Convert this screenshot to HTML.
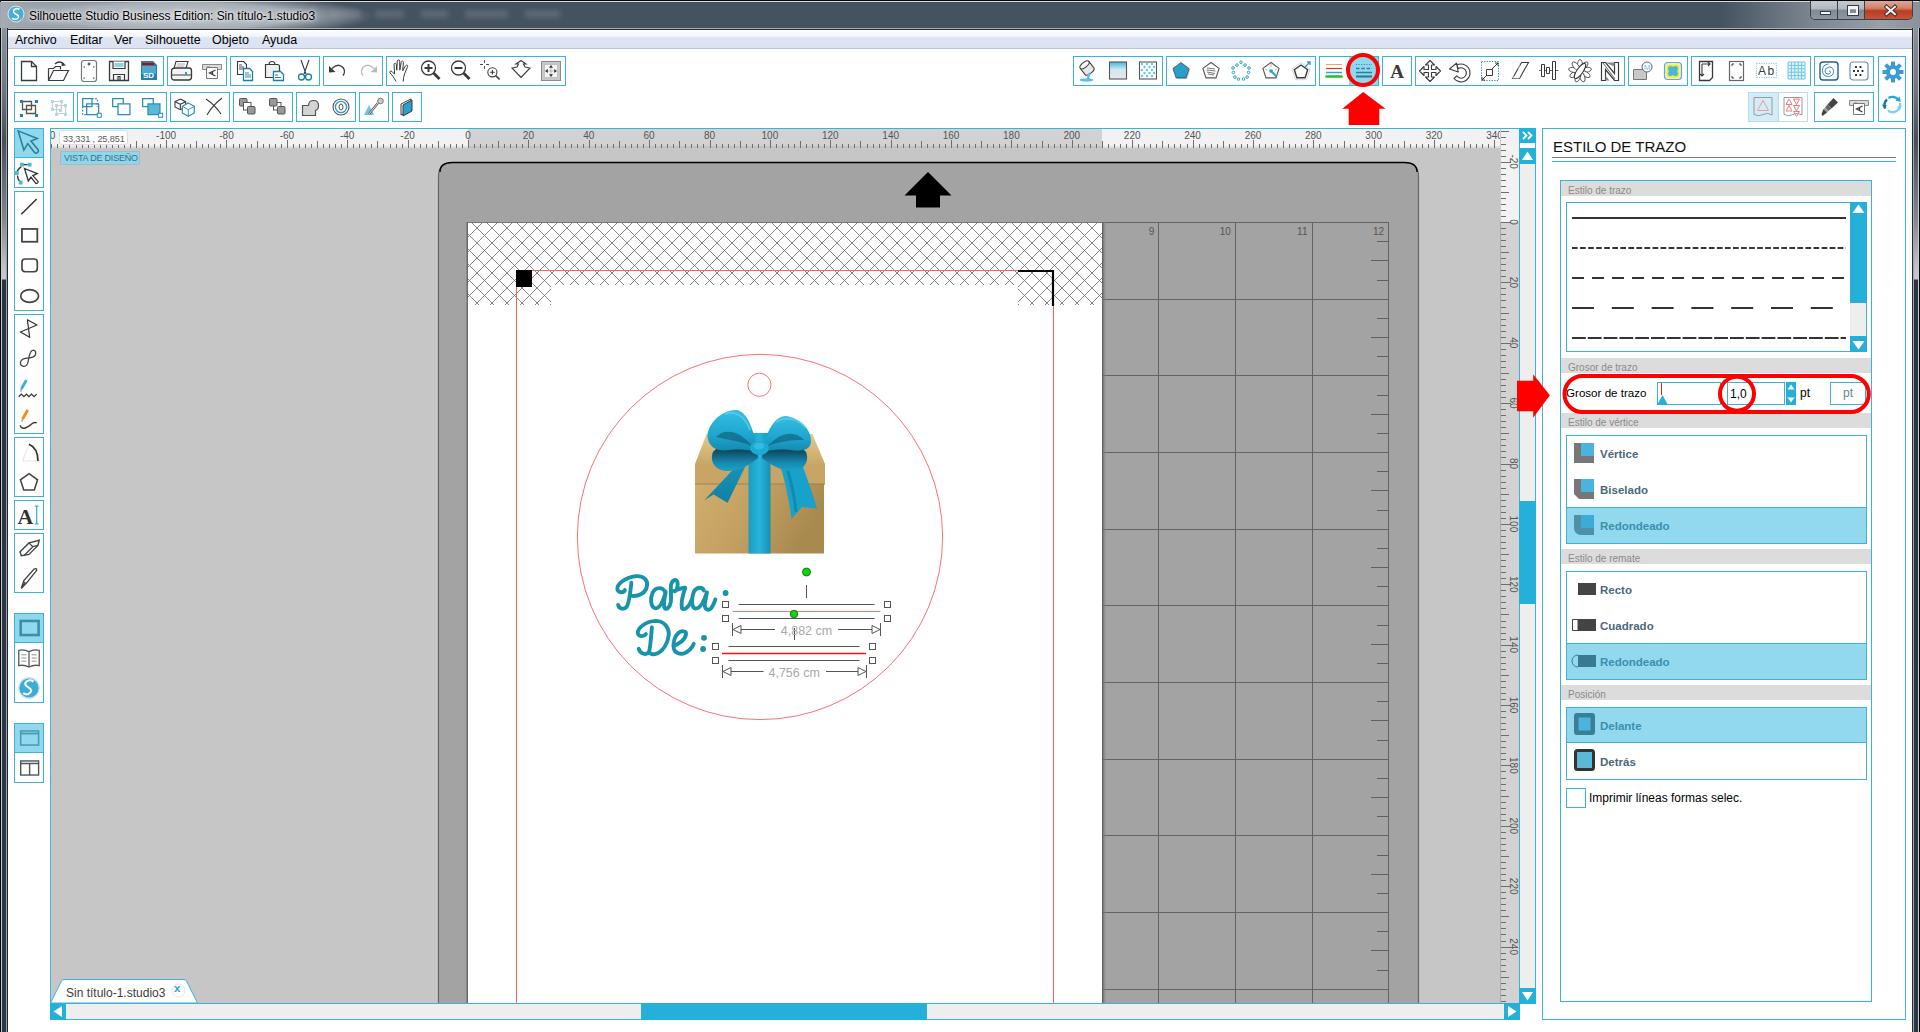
<!DOCTYPE html><html><head><meta charset="utf-8"><style>*{margin:0;padding:0;box-sizing:border-box}
html,body{width:1920px;height:1032px;overflow:hidden;background:#fff;font-family:"Liberation Sans",sans-serif;position:relative}
.a{position:absolute}
.box{position:absolute;border:1px solid #3bb2da;background:#fff}
svg{position:absolute;overflow:visible}
.hd{left:1561px;width:310px;height:15px;background:#dcdcdc;font-size:10px;color:#8a8a8a;padding:3.5px 0 0 7px;white-space:nowrap;line-height:12px}
.opt{left:1600px;margin-top:2px;font-size:11.5px;font-weight:bold;color:#4b6878;white-space:nowrap}
.opt.sl{color:#3a8fae}
</style></head><body>
<div class="a" style="left:0;top:0;width:1920px;height:1032px;background:linear-gradient(90deg,#8e969e 0,#6c7680 12px,#56626d 30px,#45525f 80px,#45525f 1720px,#7a858e 1810px,#96a0a8 1880px,#8a939b 1920px)"></div>
<div class="a" style="left:0;top:0;width:1920px;height:1px;background:#050607"></div>
<div class="a" style="left:0;top:0;width:1px;height:1032px;background:#1c2228"></div>

<div class="a" style="left:1px;top:1px;width:1918px;height:1px;background:#d5dade"></div><div class="a" style="left:8px;top:28px;width:1904px;height:1px;background:#a8aeb4"></div>
<div class="a" style="left:0;top:28px;width:8px;height:1004px;background:linear-gradient(90deg,#050607 0,#050607 1px,#c4c9ce 1px,#c4c9ce 2px,transparent 2px,transparent 6px,#9aa2aa 6px,#9aa2aa 7px,#20262e 7px)"></div><div class="a" style="left:2px;top:28px;width:4px;height:1004px;background:linear-gradient(180deg,#8a929a 0,#6e7780 62px,#45505b 112px,#7f878e 190px,#c0c4c8 240px,#c4c8cc 251px,#2a3542 252px,#2c3844 1004px)"></div>
<div class="a" style="left:1912px;top:28px;width:8px;height:1004px;background:linear-gradient(90deg,#262b31 0,#262b31 1px,#a0a8b0 1px,#a0a8b0 2px,transparent 2px,transparent 6px,#c8ccd0 6px,#c8ccd0 7px,#050607 7px)"></div><div class="a" style="left:1914px;top:28px;width:4px;height:1004px;background:linear-gradient(180deg,#8a929a 0,#6e7780 62px,#45505b 112px,#7f878e 190px,#c0c4c8 240px,#c4c8cc 251px,#2a3542 252px,#2c3844 1004px)"></div>
<div class="a" style="left:0;top:2px;width:460px;height:26px;background:radial-gradient(ellipse 200px 22px at 175px 14px,rgba(200,206,211,0.95) 0,rgba(185,192,198,0.85) 60%,rgba(69,82,95,0) 100%)"></div>
<div class="a" style="left:0;top:2px;width:120px;height:26px;background:linear-gradient(90deg,rgba(165,172,179,0.95),rgba(165,172,179,0.6) 60%,rgba(165,172,179,0))"></div>
<div class="a" style="left:7px;top:29px;width:1906px;height:1px;background:#2a2e33"></div>

<svg width="20" height="20" style="left:6px;top:4px"><circle cx="10" cy="10" r="8" fill="#48afd2" stroke="#d8e6ea" stroke-width="1"/><path d="M13.5 5.2 C10 3.8 6.2 5.6 8 8.6 C9.6 11 13.4 10.4 12.4 13.4 C11.6 15.6 8.4 15.8 6 14.4" stroke="#fff" stroke-width="1.6" fill="none"/></svg>
<div class="a" style="left:29px;top:8.5px;font-size:12px;color:#000;white-space:nowrap;letter-spacing:-0.05px;text-shadow:0 0 6px #fff,0 0 3px #fff">Silhouette Studio Business Edition: Sin título-1.studio3</div>
<div class="a" style="left:325px;top:10px;width:250px;height:10px;filter:blur(2.5px);opacity:0.24">
<span class="a" style="left:5px;width:30px;height:8px;background:#aab3bb"></span><span class="a" style="left:50px;width:29px;height:8px;background:#aab3bb"></span><span class="a" style="left:96px;width:27px;height:8px;background:#aab3bb"></span><span class="a" style="left:140px;width:43px;height:8px;background:#aab3bb"></span><span class="a" style="left:200px;width:35px;height:8px;background:#aab3bb"></span></div>
<div class="a" style="left:1810px;top:1px;width:103px;height:19px;border:1px solid #3a4047;border-top:none;border-radius:0 0 5px 5px;overflow:hidden">
<div class="a" style="left:0;top:0;width:27px;height:18px;background:linear-gradient(180deg,#c4cad0 0,#b0b8c0 45%,#7f8a94 50%,#8d97a1 100%);border-right:1px solid #3a4047"></div>
<div class="a" style="left:27px;top:0;width:27px;height:18px;background:linear-gradient(180deg,#c4cad0 0,#b0b8c0 45%,#7f8a94 50%,#8d97a1 100%);border-right:1px solid #3a4047"></div>
<div class="a" style="left:54px;top:0;width:48px;height:18px;background:linear-gradient(180deg,#e0a796 0,#d2806a 40%,#b93d22 55%,#c8533a 100%)"></div>
<div class="a" style="left:9px;top:10px;width:11px;height:4px;background:#f4f4f4;border:1px solid #333d47"></div>
<div class="a" style="left:37px;top:5px;width:10px;height:9px;border:2px solid #f4f4f4;border-top-width:3px;outline:1px solid #333d47"></div>
<svg width="48" height="18" style="left:54px;top:0"><path d="M21.5 5.8L30 13.2M30 5.8L21.5 13.2" stroke="#3a2a2a" stroke-width="3.8" stroke-linecap="square"/><path d="M21.5 5.8L30 13.2M30 5.8L21.5 13.2" stroke="#f4f4f4" stroke-width="2" stroke-linecap="square"/></svg>
</div>
<!-- menu -->
<div class="a" style="left:8px;top:30px;width:1904px;height:19px;background:linear-gradient(180deg,#ffffff 0,#f3f5fb 35%,#dfe5f2 42%,#dbe2f1 100%);border-bottom:1px solid #b9c3d6"></div>
<div class="a" style="left:15px;top:33px;font-size:12.5px;color:#000;white-space:nowrap;word-spacing:0">
<span class="a" style="left:0">Archivo</span><span class="a" style="left:55px">Editar</span><span class="a" style="left:99px">Ver</span><span class="a" style="left:130px">Silhouette</span><span class="a" style="left:197px">Objeto</span><span class="a" style="left:247px">Ayuda</span></div>
<div class="a" style="left:8px;top:49px;width:1904px;height:983px;background:#fff"></div>

<div class="box" style="left:14px;top:56px;width:150px;height:30px;"></div>
<svg width="30" height="30" style="left:14px;top:56px"><path d="M7.5 5.5h10l5 5v14h-15z" fill="#fff" stroke="#3a3a3a" stroke-width="1.3"/><path d="M17.5 5.5v5h5" fill="none" stroke="#3a3a3a" stroke-width="1.3"/></svg>
<svg width="30" height="30" style="left:44px;top:56px"><path d="M4.5 12.5h5l2-2h5v3" fill="#eee" stroke="#3a3a3a" stroke-width="1.2"/><path d="M4.5 12.5v12h15l5-10h-15l-5 10" fill="#fafafa" stroke="#3a3a3a" stroke-width="1.2"/><path d="M11 8 q4-4 9 0" fill="none" stroke="#3a3a3a" stroke-width="1.3"/><path d="M18 6l4 3.5-4.5 0.5z" fill="#3a3a3a"/></svg>
<svg width="30" height="30" style="left:74px;top:56px"><rect x="7.5" y="4.5" width="15" height="21" rx="2.5" fill="#fff" stroke="#777" stroke-width="1.2"/><path d="M15 6.5v3M13.5 8h3M9.5 11h1.5M19 11h1.5M9.5 22h1.5M19 22h1.5" stroke="#3a3a3a" stroke-width="1.2"/></svg>
<svg width="30" height="30" style="left:104px;top:56px"><path d="M5.5 5.5h19v19h-19z" fill="#f4f4f4" stroke="#3a3a3a" stroke-width="1.3"/><path d="M9 5.5v7h12v-7" fill="#fff" stroke="#3a3a3a" stroke-width="1.2"/><path d="M10.5 8h9M10.5 10h9" stroke="#2aa0c8" stroke-width="1"/><path d="M9.5 24.5v-6h11v6M14 24.5v-4h2v4" fill="none" stroke="#3a3a3a" stroke-width="1.2"/></svg>
<svg width="30" height="30" style="left:134px;top:56px"><path d="M7 5h12l4 4v15h-16z" fill="#1f82a6"/><path d="M8 7h12v2h-12z" fill="#d00000"/><path d="M8 10h14v8h-14z" fill="#5bbde0" opacity="0.7"/><text x="9" y="22" font-size="8" font-weight="bold" fill="#fff" font-family="Liberation Sans">SD</text></svg>
<div class="box" style="left:167px;top:56px;width:60px;height:30px;"></div>
<svg width="30" height="30" style="left:167px;top:56px"><path d="M9 5.5h12l-2 7h-12z" fill="#fff" stroke="#3a3a3a" stroke-width="1.1"/><path d="M10 8h8M9.5 10h8" stroke="#999" stroke-width="0.8"/><path d="M4.5 15q0-3 4-3h14q2 0 2 3v6q0 3-3 3h-14q-3 0-3-3z" fill="#f4f4f4" stroke="#3a3a3a" stroke-width="1.3"/><path d="M5 19h19" stroke="#3a3a3a" stroke-width="1"/><rect x="18" y="16" width="2" height="3" fill="#2aa0c8"/></svg>
<svg width="30" height="30" style="left:197px;top:56px"><path d="M5.5 8.5h19v5h-19z" fill="#ddd" stroke="#888" stroke-width="1"/><path d="M9.5 11.5h11v11h-11z" fill="#fff" stroke="#777" stroke-width="1"/><path d="M18.5 14l-6 3 6 3M15.5 15.5v3" fill="none" stroke="#3a3a3a" stroke-width="1.3"/><path d="M10 10.5h3" stroke="#6cc6e6" stroke-width="1"/></svg>
<div class="box" style="left:230px;top:56px;width:90px;height:30px;"></div>
<svg width="30" height="30" style="left:230px;top:56px"><path d="M7.5 5.5h6l3 3v10h-9z" fill="#fff" stroke="#3a3a3a" stroke-width="1.1"/><path d="M9 9h3M9 11h5M9 13h5" stroke="#3a3a3a" stroke-width="0.9"/><path d="M13.5 12.5h6l3 3v9h-9z" fill="#fff" stroke="#1f7fa0" stroke-width="1.3"/><path d="M15 17h4M15 19h6M15 21h6" stroke="#1f7fa0" stroke-width="0.9"/></svg>
<svg width="30" height="30" style="left:260px;top:56px"><path d="M5.5 8.5h12q2 0 2 2v11h-14z" fill="#f0f0f0" stroke="#3a3a3a" stroke-width="1.2"/><path d="M9 8.5q0-3 3-3t3 3z" fill="#fff" stroke="#3a3a3a" stroke-width="1.1"/><path d="M13.5 15.5h7l3 3v6h-10z" fill="#fff" stroke="#1f7fa0" stroke-width="1.3"/><path d="M15 19h3M15 21.5h6" stroke="#1f7fa0" stroke-width="1"/></svg>
<svg width="30" height="30" style="left:290px;top:56px"><path d="M11 4l5 14M19 4l-5 14" stroke="#3a3a3a" stroke-width="1.1"/><circle cx="11.5" cy="21" r="3" fill="none" stroke="#1f7fa0" stroke-width="1.3"/><circle cx="18.5" cy="21" r="3" fill="none" stroke="#1f7fa0" stroke-width="1.3"/></svg>
<div class="box" style="left:323px;top:56px;width:60px;height:30px;"></div>
<svg width="30" height="30" style="left:323px;top:56px"><path d="M9 12.5q6-6 11-1q3 4 0 8" fill="none" stroke="#3a3a3a" stroke-width="1.3"/><path d="M6 10l0 6.5 6.5-0.5z" fill="#3a3a3a"/></svg>
<svg width="30" height="30" style="left:353px;top:56px"><path d="M21 12.5q-6-6-11-1q-3 4 0 8" fill="none" stroke="#bbb" stroke-width="1.3"/><path d="M24 10l0 6.5-6.5-0.5z" fill="#bbb"/></svg>
<div class="box" style="left:386px;top:56px;width:180px;height:30px;"></div>
<svg width="30" height="30" style="left:386px;top:56px"><path d="M10 25.5C8 21.5 5.5 18.5 4 16.8C3.3 15.6 4.6 14.6 5.8 15.4L8.6 18.2L8 8.6C7.9 6.9 10.2 6.8 10.3 8.5L10.8 14.2L11.3 5.2C11.4 3.4 13.7 3.4 13.7 5.2L13.8 14.2L15.2 6.3C15.5 4.6 17.6 4.8 17.4 6.5L16.7 14.8L19.5 9.8C20.3 8.4 22.2 9 21.6 10.6L18.6 17.8C17.8 20.2 17.2 22.8 17.2 25.5" fill="#fff" stroke="#3a3a3a" stroke-width="1"/></svg>
<svg width="30" height="30" style="left:416px;top:56px"><circle cx="12.5" cy="12" r="7" fill="#fff" stroke="#3a3a3a" stroke-width="1.3"/><path d="M17.5 17l6 6" stroke="#3a3a3a" stroke-width="2.8"/><path d="M12.5 8v8M8.5 12h8" stroke="#3a3a3a" stroke-width="2"/></svg>
<svg width="30" height="30" style="left:446px;top:56px"><circle cx="12.5" cy="12" r="7" fill="#fff" stroke="#3a3a3a" stroke-width="1.3"/><path d="M17.5 17l6 6" stroke="#3a3a3a" stroke-width="2.8"/><path d="M8.5 12h8" stroke="#3a3a3a" stroke-width="2"/></svg>
<svg width="30" height="30" style="left:476px;top:56px"><path d="M8.5 4v3M8.5 10v3M4 8.5h3M10 8.5h3" stroke="#3a3a3a" stroke-width="0.9"/><circle cx="16.4" cy="16.3" r="4.6" fill="#fff" stroke="#3a3a3a" stroke-width="1.1"/><path d="M19.6 19.5l4 4" stroke="#3a3a3a" stroke-width="1.7"/><path d="M16.4 14v4.6M14.1 16.3h4.6" stroke="#3a3a3a" stroke-width="1.1"/></svg>
<svg width="30" height="30" style="left:506px;top:56px"><path d="M15 4.5l5 3.5h-2.5l1.5 3 5 1-9 9.5-9-9.5 5-1 1.5-3h-2.5z" fill="#fff" stroke="#3a3a3a" stroke-width="1.1"/></svg>
<svg width="30" height="30" style="left:536px;top:56px"><rect x="5.5" y="5.5" width="19" height="19" fill="#c8c8c8" stroke="#8a8a8a" stroke-width="1"/><rect x="8.5" y="8.5" width="13" height="13" fill="#f4f4f4" stroke="#b0b0b0" stroke-width="0.6"/><path d="M15 9l2 2.8h-4zM15 21l2-2.8h-4zM9 15l2.8 2v-4zM21 15l-2.8 2v-4z" fill="#333"/><path d="M15 12.5v5M12.5 15h5" stroke="#555" stroke-width="0.6" stroke-dasharray="1 1"/></svg>
<div class="box" style="left:14px;top:92px;width:60px;height:30px;"></div>
<svg width="30" height="30" style="left:14px;top:92px"><path d="M8.5 9.5h9v8h-9zM12.5 13.5h9v8h-9z" fill="none" stroke="#555" stroke-width="1.3"/><path d="M6 8h3v3h-3zM21 8h3v3h-3zM6 22h3v3h-3zM21 22h3v3h-3z" fill="#1f86ab"/></svg>
<svg width="30" height="30" style="left:44px;top:92px"><path d="M8.5 9.5h9v8h-9zM12.5 13.5h9v8h-9z" fill="none" stroke="#ccc" stroke-width="1.2"/><path d="M7 8h3v3h-3zM16 8h3v3h-3zM7 16h3v3h-3zM11 12h3v3h-3zM20 12h3v3h-3zM11 21h3v3h-3zM20 21h3v3h-3zM15 17h3v3h-3z" fill="#a9dbea"/></svg>
<div class="box" style="left:77px;top:92px;width:90px;height:30px;"></div>
<svg width="30" height="30" style="left:77px;top:92px"><g transform="translate(5 6) scale(1.33) translate(-5 -6)"><path d="M5.5 6.5h7v6h-7z" fill="none" stroke="#2a8fb0" stroke-width="0.95"/><path d="M12.5 6.5h4v6" fill="none" stroke="#2a8fb0" stroke-width="0.95" stroke-dasharray="1.2 1.2"/><path d="M8.5 10.5h9v8h-9z" fill="none" stroke="#2a8fb0" stroke-width="0.95"/><path d="M5.5 12.5v6h3" fill="none" stroke="#2a8fb0" stroke-width="0.95" stroke-dasharray="1.2 1.2"/><rect x="16.5" y="17.5" width="3" height="3" fill="#fff" stroke="#2a8fb0" stroke-width="0.75"/></g></svg>
<svg width="30" height="30" style="left:107px;top:92px"><g transform="translate(5 6) scale(1.33) translate(-5 -6)"><path d="M5.5 6.5h8v6h-8z" fill="none" stroke="#2a8fb0" stroke-width="0.95"/><path d="M9.5 10.5h9v8h-9z" fill="#fff" stroke="#2a8fb0" stroke-width="0.95"/></g></svg>
<svg width="30" height="30" style="left:137px;top:92px"><g transform="translate(5 6) scale(1.33) translate(-5 -6)"><path d="M5.5 6.5h8v6h-8z" fill="none" stroke="#2a8fb0" stroke-width="0.95"/><path d="M9.5 10.5h9v8h-9z" fill="#5ab8d8" stroke="#2a8fb0" stroke-width="0.95"/><rect x="17.5" y="17.5" width="3" height="3" fill="#fff" stroke="#2a8fb0" stroke-width="0.75"/></g></svg>
<div class="box" style="left:170px;top:92px;width:60px;height:30px;"></div>
<svg width="30" height="30" style="left:170px;top:92px"><g transform="translate(5 7) scale(1.33) translate(-5 -5)"><path d="M9 5l4 2v4l-4 2-4-2v-4z" fill="#fff" stroke="#3a3a3a" stroke-width="0.8"/><path d="M9 9l4-2M9 9v4M9 9l-4-2" stroke="#3a3a3a" stroke-width="0.8" fill="none"/><path d="M15 8l4.5 2.5v5l-4.5 2.5-4.5-2.5v-5z" fill="#fff" stroke="#2a8fb0" stroke-width="0.9"/><path d="M15 13l4.5-2.5M15 13v5M15 13l-4.5-2.5" stroke="#2a8fb0" stroke-width="0.7" fill="none"/></g></svg>
<svg width="30" height="30" style="left:200px;top:92px"><path d="M6 7q9 6 15 15M22 6q-10 8-15 17" stroke="#3a3a3a" stroke-width="1.1" fill="none"/></svg>
<div class="box" style="left:233px;top:92px;width:60px;height:30px;"></div>
<svg width="30" height="30" style="left:233px;top:92px"><rect x="6.5" y="6.5" width="7.5" height="7.5" rx="1" fill="#999" stroke="#555" stroke-width="1"/><rect x="10.5" y="10.5" width="7.5" height="7.5" fill="#fff" stroke="#555" stroke-width="1"/><rect x="14.5" y="14.5" width="7.5" height="7.5" rx="1" fill="#999" stroke="#555" stroke-width="1"/></svg>
<svg width="30" height="30" style="left:263px;top:92px"><rect x="10.5" y="10.5" width="7.5" height="7.5" fill="#fff" stroke="#555" stroke-width="1"/><rect x="6.5" y="6.5" width="7.5" height="7.5" rx="1" fill="#999" stroke="#555" stroke-width="1"/><rect x="14.5" y="14.5" width="7.5" height="7.5" rx="1" fill="#999" stroke="#555" stroke-width="1"/></svg>
<div class="box" style="left:296px;top:92px;width:60px;height:30px;"></div>
<svg width="30" height="30" style="left:296px;top:92px"><path d="M6.5 13.5h6q0-5 5-5t5 5q0 4-3 5v5h-13z" fill="#d4d4d4" stroke="#555" stroke-width="1.2"/></svg>
<svg width="30" height="30" style="left:326px;top:92px"><circle cx="15" cy="15" r="8" fill="#fff" stroke="#555" stroke-width="1.1"/><circle cx="15" cy="15" r="5.6" fill="none" stroke="#2aa0c8" stroke-width="1.4"/><ellipse cx="15" cy="15" rx="2" ry="3" fill="none" stroke="#555" stroke-width="1"/></svg>
<div class="box" style="left:359px;top:92px;width:30px;height:30px;"></div>
<svg width="30" height="30" style="left:359px;top:92px"><path d="M5 23l5-10 5 10z" fill="#6ec6e4"/><path d="M10 22l9-11" stroke="#555" stroke-width="2.2"/><path d="M10 22l9-11" stroke="#eee" stroke-width="0.9"/><circle cx="21.5" cy="9" r="2.8" fill="#ccc" stroke="#777" stroke-width="1"/></svg>
<div class="box" style="left:392px;top:92px;width:30px;height:30px;"></div>
<svg width="30" height="30" style="left:392px;top:92px"><path d="M9 12l10-5v11l-10 5z" fill="none" stroke="#3a3a3a" stroke-width="1"/><path d="M11 13l9-5v11l-9 5z" fill="#2aa0cc" stroke="#3a3a3a" stroke-width="1"/></svg>
<div class="box" style="left:1073px;top:56px;width:90px;height:30px;"></div>
<svg width="30" height="30" style="left:1073px;top:56px"><g transform="rotate(-38 14 12)"><path d="M8.5 8v8q0 2.5 5.5 2.5t5.5-2.5v-8" fill="#e8e8e8" stroke="#3a3a3a" stroke-width="1.1"/><ellipse cx="14" cy="8" rx="5.5" ry="2.5" fill="#fff" stroke="#3a3a3a" stroke-width="1.1"/></g><path d="M17 17q-3 4-1 6.5" stroke="#5cbcdc" stroke-width="2.2" fill="none"/><ellipse cx="13.5" cy="24" rx="7" ry="1.6" fill="#5cbcdc"/></svg>
<svg width="30" height="30" style="left:1103px;top:56px"><defs><linearGradient id="gr" x1="0" y1="0" x2="0" y2="1"><stop offset="0" stop-color="#4ab6dc"/><stop offset="0.45" stop-color="#cfe9f3"/><stop offset="1" stop-color="#e8e8e8"/></linearGradient></defs><rect x="6.5" y="6" width="17" height="17" fill="url(#gr)" stroke="#555" stroke-width="1.1"/></svg>
<svg width="30" height="30" style="left:1133px;top:56px"><rect x="6.5" y="6" width="17" height="17" fill="#fff" stroke="#555" stroke-width="1.1"/><circle cx="9" cy="8" r="1.2" fill="#6cc6e6"/><circle cx="14" cy="8" r="1.2" fill="#6cc6e6"/><circle cx="19" cy="8" r="1.2" fill="#6cc6e6"/><circle cx="11.5" cy="11" r="1.2" fill="#6cc6e6"/><circle cx="16.5" cy="11" r="1.2" fill="#6cc6e6"/><circle cx="21" cy="11" r="1.2" fill="#6cc6e6"/><circle cx="9" cy="14" r="1.2" fill="#6cc6e6"/><circle cx="14" cy="14" r="1.2" fill="#6cc6e6"/><circle cx="19" cy="14" r="1.2" fill="#6cc6e6"/><circle cx="11.5" cy="17" r="1.2" fill="#6cc6e6"/><circle cx="16.5" cy="17" r="1.2" fill="#6cc6e6"/><circle cx="21" cy="17" r="1.2" fill="#6cc6e6"/><circle cx="9" cy="20" r="1.2" fill="#6cc6e6"/><circle cx="14" cy="20" r="1.2" fill="#6cc6e6"/><circle cx="19" cy="20" r="1.2" fill="#6cc6e6"/></svg>
<div class="box" style="left:1166px;top:56px;width:150px;height:30px;"></div>
<svg width="30" height="30" style="left:1166px;top:56px"><polygon points="16.0,7.5 24.1,13.4 21.0,22.9 11.0,22.9 7.9,13.4" fill="#999" opacity="0.6"/><polygon points="15.0,6.5 23.1,12.4 20.0,21.9 10.0,21.9 6.9,12.4" fill="#2aa0c8" stroke="#333" stroke-width="0.6"/></svg>
<svg width="30" height="30" style="left:1196px;top:56px"><polygon points="15.0,6.5 23.1,12.4 20.0,21.9 10.0,21.9 6.9,12.4" fill="#fff" stroke="#555" stroke-width="1.1"/><path d="M11 12l8 1M10.5 14l9 1M11 16l8 1.5M12 18l6 1" stroke="#555" stroke-width="0.8"/></svg>
<svg width="30" height="30" style="left:1226px;top:56px"><circle cx="15.0" cy="6.2" r="1.3" fill="#fff" stroke="#2aa0c8" stroke-width="1"/><circle cx="19.0" cy="9.1" r="1.3" fill="#fff" stroke="#2aa0c8" stroke-width="1"/><circle cx="23.0" cy="12.0" r="1.3" fill="#fff" stroke="#2aa0c8" stroke-width="1"/><circle cx="22.6" cy="16.4" r="1.3" fill="#fff" stroke="#2aa0c8" stroke-width="1"/><circle cx="21.1" cy="21.1" r="1.3" fill="#fff" stroke="#2aa0c8" stroke-width="1"/><circle cx="17.5" cy="23.0" r="1.3" fill="#fff" stroke="#2aa0c8" stroke-width="1"/><circle cx="12.5" cy="23.0" r="1.3" fill="#fff" stroke="#2aa0c8" stroke-width="1"/><circle cx="8.9" cy="21.1" r="1.3" fill="#fff" stroke="#2aa0c8" stroke-width="1"/><circle cx="7.4" cy="16.4" r="1.3" fill="#fff" stroke="#2aa0c8" stroke-width="1"/><circle cx="7.0" cy="12.0" r="1.3" fill="#fff" stroke="#2aa0c8" stroke-width="1"/><circle cx="11.0" cy="9.1" r="1.3" fill="#fff" stroke="#2aa0c8" stroke-width="1"/></svg>
<svg width="30" height="30" style="left:1256px;top:56px"><polygon points="15.0,6.5 23.1,12.4 20.0,21.9 10.0,21.9 6.9,12.4" fill="#fff" stroke="#555" stroke-width="1.1"/><circle cx="15" cy="15" r="1.8" fill="#2aa0c8"/><path d="M15 15l5.5 5.5" stroke="#2aa0c8" stroke-width="2"/><path d="M15 8v3M9 13l2 1M21 13l-2 1" stroke="#999" stroke-width="0.7"/></svg>
<svg width="30" height="30" style="left:1286px;top:56px"><polygon points="15.0,6.5 24.0,13.1 20.6,23.7 9.4,23.7 6.0,13.1" fill="none" stroke="#ccc" stroke-width="0.8"/><polygon points="15.0,9.0 21.7,13.8 19.1,21.7 10.9,21.7 8.3,13.8" fill="#fff" stroke="#3a3a3a" stroke-width="1.4"/><path d="M19 11l5-5M21 6h3v3" stroke="#2aa0c8" stroke-width="1.3" fill="none"/></svg>
<div class="box" style="left:1319px;top:56px;width:60px;height:30px"></div>
<div class="a" style="left:1349px;top:57px;width:29px;height:28px;background:#8fd8ee"></div>
<svg width="30" height="30" style="left:1319px;top:56px"><path d="M7 8.5h16" stroke="#f6a45a" stroke-width="1"/><path d="M7 12.5h16" stroke="#e53030" stroke-width="1.2"/><path d="M7 16.5h16" stroke="#2aa0d8" stroke-width="1.5"/><path d="M7.5 20.5h15" stroke="#22c022" stroke-width="2.4" stroke-linecap="round"/></svg><svg width="30" height="30" style="left:1349px;top:56px"><path d="M7 8.5h16" stroke="#2f7e94" stroke-width="1" stroke-dasharray="1 1.6"/><path d="M7 12.5h16" stroke="#2f7e94" stroke-width="1.3" stroke-dasharray="3.5 1.8"/><path d="M7 16.5h16" stroke="#2f7e94" stroke-width="1.5"/><path d="M7 20.5h16" stroke="#2f7e94" stroke-width="2.2"/></svg>
<div class="box" style="left:1382px;top:56px;width:30px;height:30px;"></div>
<svg width="30" height="30" style="left:1382px;top:56px"><text x="15" y="21.5" text-anchor="middle" font-family="Liberation Serif" font-size="19" font-weight="bold" fill="#3a3a3a">A</text></svg>
<div class="box" style="left:1415px;top:56px;width:210px;height:30px;"></div>
<svg width="30" height="30" style="left:1415px;top:56px"><path d="M15 4.5l4.5 4.5h-3v4.5h4.5v-3l4.5 4.5-4.5 4.5v-3h-4.5v4.5h3l-4.5 4.5-4.5-4.5h3v-4.5h-4.5v3l-4.5-4.5 4.5-4.5v3h4.5v-4.5h-3z" fill="#fff" stroke="#3a3a3a" stroke-width="1.1" stroke-linejoin="round"/></svg>
<svg width="30" height="30" style="left:1445px;top:56px"><path d="M11.5 9.2A9 9 0 1 1 9 22.5L11.8 19.8A5.2 5.2 0 1 0 13.5 12.5Z" fill="#fff" stroke="#3a3a3a" stroke-width="1.1" stroke-linejoin="round"/><path d="M4.5 13l7-5.8 1.8 8.8z" fill="#fff" stroke="#3a3a3a" stroke-width="1.1" stroke-linejoin="round"/></svg>
<svg width="30" height="30" style="left:1475px;top:56px"><rect x="6.5" y="5.5" width="17" height="19" fill="none" stroke="#2a8fb0" stroke-width="1" stroke-dasharray="1.3 1.3"/><path d="M11.5 13.5h6v6h-6z" fill="#fff" stroke="#3a3a3a" stroke-width="1"/><path d="M17 13l6-6M20 7h3v3M12 19l-5 5M7 21v3h3" fill="none" stroke="#3a3a3a" stroke-width="1"/></svg>
<svg width="30" height="30" style="left:1505px;top:56px"><path d="M7.5 22.5l9-16h7l-9 16z" fill="none" stroke="#3a3a3a" stroke-width="1.1"/><rect x="8" y="6" width="6" height="16" fill="none" stroke="#eee" stroke-width="0.8"/></svg>
<svg width="30" height="30" style="left:1535px;top:56px"><path d="M6.5 8.5h3v12h-3zM11.5 11.5h3v6h-3zM17.5 5.5h3v18h-3z" fill="#fff" stroke="#3a3a3a" stroke-width="1"/><path d="M4 14.5h2M9.5 14.5h2M14.5 14.5h3M20.5 14.5h3" stroke="#3a3a3a" stroke-width="0.8"/></svg>
<svg width="30" height="30" style="left:1565px;top:56px"><ellipse cx="15" cy="9" rx="2.5" ry="5.5" fill="#fff" stroke="#3a3a3a" stroke-width="0.8" transform="rotate(0 15 15)"/><ellipse cx="15" cy="9" rx="2.5" ry="5.5" fill="#fff" stroke="#3a3a3a" stroke-width="0.8" transform="rotate(40 15 15)"/><ellipse cx="15" cy="9" rx="2.5" ry="5.5" fill="#fff" stroke="#3a3a3a" stroke-width="0.8" transform="rotate(80 15 15)"/><ellipse cx="15" cy="9" rx="2.5" ry="5.5" fill="#fff" stroke="#3a3a3a" stroke-width="0.8" transform="rotate(120 15 15)"/><ellipse cx="15" cy="9" rx="2.5" ry="5.5" fill="#fff" stroke="#3a3a3a" stroke-width="0.8" transform="rotate(160 15 15)"/><ellipse cx="15" cy="9" rx="2.5" ry="5.5" fill="#fff" stroke="#3a3a3a" stroke-width="0.8" transform="rotate(200 15 15)"/><ellipse cx="15" cy="9" rx="2.5" ry="5.5" fill="#fff" stroke="#3a3a3a" stroke-width="0.8" transform="rotate(240 15 15)"/><ellipse cx="15" cy="9" rx="2.5" ry="5.5" fill="#fff" stroke="#3a3a3a" stroke-width="0.8" transform="rotate(280 15 15)"/><ellipse cx="15" cy="9" rx="2.5" ry="5.5" fill="#fff" stroke="#3a3a3a" stroke-width="0.8" transform="rotate(320 15 15)"/><ellipse cx="15" cy="15" rx="3" ry="9" fill="#fff" stroke="#3a3a3a" stroke-width="1" transform="rotate(35 15 15)"/></svg>
<svg width="30" height="30" style="left:1595px;top:56px"><path d="M6.5 6.5h4l9 11v-11h4v18h-4l-9-11v11h-4z" fill="#fff" stroke="#3a3a3a" stroke-width="1.2"/><path d="M8 7l12 16" stroke="#3a3a3a" stroke-width="0.8"/><path d="M10 6.5h9.5v4" fill="#888"/><path d="M10.5 24.5v-5l4 5z" fill="#888"/></svg>
<div class="box" style="left:1628px;top:56px;width:60px;height:30px;"></div>
<svg width="30" height="30" style="left:1628px;top:56px"><path d="M5.5 13.5h13v10h-13z" fill="#c8c8c8" stroke="#777" stroke-width="1"/><circle cx="19" cy="11" r="5" fill="#fff" stroke="#666" stroke-width="1"/><text x="19" y="14" text-anchor="middle" font-size="7.5" fill="#6cc6e6" font-family="Liberation Sans">M</text></svg>
<svg width="30" height="30" style="left:1658px;top:56px"><rect x="6.5" y="6.5" width="17" height="17" rx="3" fill="#e9e9e9" stroke="#6aa8bc" stroke-width="1.2"/><path d="M10 10q2.5-1.5 5 0q2.5-1.5 5 0q1.5 2.5 0 5q1.5 2.5 0 5q-2.5 1.5-5 0q-2.5 1.5-5 0q-1.5-2.5 0-5q-1.5-2.5 0-5z" fill="#4cb6dc" stroke="#f4f000" stroke-width="1.6"/></svg>
<div class="box" style="left:1691px;top:56px;width:120px;height:30px;"></div>
<svg width="30" height="30" style="left:1691px;top:56px"><path d="M8.5 5.5h13v16l-3 3h-10z" fill="#fff" stroke="#3a3a3a" stroke-width="1.3"/><path d="M11 8h8M17 6l2 2-2 2M11 8v12M9 18l2 2 2-2" stroke="#3a3a3a" stroke-width="1.1" fill="none"/></svg>
<svg width="30" height="30" style="left:1721px;top:56px"><rect x="8.5" y="5.5" width="14" height="19" fill="#fff" stroke="#666" stroke-width="1.2"/><path d="M11 10v-2h2M18 8h2v2M11 20v2h2M18 22h2v-2" stroke="#3a3a3a" stroke-width="1" fill="none"/></svg>
<svg width="30" height="30" style="left:1751px;top:56px"><rect x="5.5" y="7.5" width="20" height="14" fill="none" stroke="#6cc6e6" stroke-width="0.9" stroke-dasharray="1.2 1.2"/><text x="7" y="19" font-size="12" fill="#3a3a3a" font-family="Liberation Sans">A</text><text x="16.5" y="19" font-size="12" fill="#3a3a3a" font-family="Liberation Sans">b</text></svg>
<svg width="30" height="30" style="left:1781px;top:56px"><rect x="7" y="6" width="17" height="17" fill="#e8f6fb"/><path d="M7.0 6v17M7 6.0h17" stroke="#6cc6e6" stroke-width="1"/><path d="M10.4 6v17M7 9.4h17" stroke="#6cc6e6" stroke-width="1"/><path d="M13.8 6v17M7 12.8h17" stroke="#6cc6e6" stroke-width="1"/><path d="M17.2 6v17M7 16.2h17" stroke="#6cc6e6" stroke-width="1"/><path d="M20.6 6v17M7 19.6h17" stroke="#6cc6e6" stroke-width="1"/><path d="M24.0 6v17M7 23.0h17" stroke="#6cc6e6" stroke-width="1"/></svg>
<div class="box" style="left:1814px;top:56px;width:60px;height:30px;"></div>
<svg width="30" height="30" style="left:1814px;top:56px"><rect x="6" y="6" width="18" height="18" rx="3" fill="#fff" stroke="#1f5f99" stroke-width="1.4"/><path d="M15 15q1.5 0 1.5 1.5t-2.5 1.5q-3 0-3-3t4-4q4.5 0 4.5 4.5t-5 5q-6 0-6-6t6-6.5" fill="none" stroke="#2a7fc0" stroke-width="0.9"/></svg>
<svg width="30" height="30" style="left:1844px;top:56px"><rect x="6" y="6" width="18" height="18" rx="3" fill="#fff" stroke="#6a8fb8" stroke-width="1.2"/><circle cx="12" cy="11" r="1.1" fill="#111"/><circle cx="16.5" cy="11" r="1.1" fill="#111"/><circle cx="10" cy="15" r="1.1" fill="#111"/><circle cx="14" cy="15" r="1.1" fill="#111"/><circle cx="18.5" cy="15" r="1.1" fill="#111"/><circle cx="12" cy="19" r="1.1" fill="#111"/><circle cx="16.5" cy="19" r="1.1" fill="#111"/></svg>
<div class="box" style="left:1878px;top:56px;width:28px;height:66px"></div>
<svg width="28" height="30" style="left:1878px;top:58px"><rect x="13" y="3.5" width="4" height="5" fill="#3a9bd5" transform="rotate(0 15 14)"/><rect x="13" y="3.5" width="4" height="5" fill="#3a9bd5" transform="rotate(45 15 14)"/><rect x="13" y="3.5" width="4" height="5" fill="#3a9bd5" transform="rotate(90 15 14)"/><rect x="13" y="3.5" width="4" height="5" fill="#3a9bd5" transform="rotate(135 15 14)"/><rect x="13" y="3.5" width="4" height="5" fill="#3a9bd5" transform="rotate(180 15 14)"/><rect x="13" y="3.5" width="4" height="5" fill="#3a9bd5" transform="rotate(225 15 14)"/><rect x="13" y="3.5" width="4" height="5" fill="#3a9bd5" transform="rotate(270 15 14)"/><rect x="13" y="3.5" width="4" height="5" fill="#3a9bd5" transform="rotate(315 15 14)"/><circle cx="15" cy="14" r="7" fill="#3a9bd5"/><circle cx="15" cy="14" r="3" fill="#fff"/></svg><svg width="28" height="30" style="left:1878px;top:90px"><path d="M7.5 18.5A7.5 7.5 0 0 1 9 9.5" fill="none" stroke="#1f7a96" stroke-width="2.4"/><path d="M6 19l-2-4.5 5 0.5z" fill="#1f7a96"/><path d="M10.5 8A7.5 7.5 0 0 1 20.5 10" fill="none" stroke="#22a8d8" stroke-width="2.4"/><path d="M22 6.5l0.5 5.5-5-1.5z" fill="#22a8d8"/><path d="M22 13A7.5 7.5 0 0 1 10 20.5" fill="none" stroke="#7fd0ea" stroke-width="2.4"/><path d="M23.5 16l-2 4.5-2.5-4z" fill="#7fd0ea"/></svg>
<div class="box" style="left:1748px;top:92px;width:60px;height:30px;border-color:#b5dfee"></div>
<div class="a" style="left:1749px;top:93px;width:29px;height:28px;background:#d2edf7"></div>
<div class="a" style="left:1778px;top:93px;width:1px;height:28px;background:#b5dfee"></div>
<svg width="30" height="30" style="left:1748px;top:92px"><path d="M6 5.5h18v17.5q-4.5-3-9-0.5t-9 0z" fill="none" stroke="#9a9a9a" stroke-width="1"/><path d="M15 8.5l5.5 10h-11z" fill="none" stroke="#f09a9a" stroke-width="1"/></svg><svg width="30" height="30" style="left:1778px;top:92px"><path d="M6 5.5h18v17.5q-4.5-3-9-0.5t-9 0z" fill="#fff" stroke="#999" stroke-width="1"/><path d="M11 7l3 5.5h-6zM18.5 12.5l3-5.5h-6zM11 13.5l3 5.5h-6zM18.5 19l3-5.5h-6zM18.5 24.5l3-5h-6z" fill="none" stroke="#f07a7a" stroke-width="1"/></svg>
<div class="box" style="left:1814px;top:92px;width:60px;height:30px;"></div>
<svg width="30" height="30" style="left:1814px;top:92px"><path d="M13.5 12.5l6-6.5 4.5 4.5-6.5 6z" fill="#444"/><path d="M13.5 12.5l4 4-3 2.5-3.5-3.5z" fill="#666"/><path d="M11 15.5l3.5 3.5-1.5 1.5-3.5-3.5z" fill="#999"/><path d="M9.5 17l3.5 3.5-4.5 3.5-1-2z" fill="#444"/></svg>
<svg width="30" height="30" style="left:1844px;top:92px"><path d="M5.5 8.5h19v5h-19z" fill="#ddd" stroke="#888" stroke-width="1"/><path d="M9.5 11.5h11v11h-11z" fill="#fff" stroke="#777" stroke-width="1"/><path d="M18.5 14l-6 3 6 3M15.5 15.5v3" fill="none" stroke="#3a3a3a" stroke-width="1.3"/><path d="M10 10.5h3" stroke="#6cc6e6" stroke-width="1"/></svg>
<div class="box" style="left:14px;top:128px;width:30px;height:60px"></div>
<div class="a" style="left:15px;top:129px;width:28px;height:29px;background:#8fd8ee;border-bottom:1px solid #3bb2da"></div>
<svg width="30" height="30" style="left:14px;top:128px"><g transform="translate(15 15) scale(1.28) translate(-15 -15)"><path d="M6.5 5.5l15 6-5 2 5.5 6.5q1 1.5-0.5 2.5t-2.5-0.5l-5-6.5-3 5z" fill="#8fd8ee" stroke="#2f7e94" stroke-width="1.2"/></g></svg>
<svg width="30" height="30" style="left:14px;top:158px"><g transform="translate(15 15) scale(1.28) translate(-15 -15)"><path d="M9 10q-3 2-3.5 5M6 17q0 3 2.5 5.5M10 8.5h4" stroke="#333" stroke-width="1" fill="none"/><rect x="8" y="7" width="3" height="3" fill="#4cb8dc"/><rect x="14" y="7" width="3" height="3" fill="#4cb8dc"/><rect x="4" y="13.5" width="3" height="3" fill="#4cb8dc"/><rect x="7" y="21" width="3" height="3" fill="#4cb8dc"/><path d="M11.5 11.5l10 4-3.5 1.5 4 4.5q0.5 1-0.5 1.5t-1.5-0.3l-3.5-4.5-2 3z" fill="#fff" stroke="#333" stroke-width="1"/></g></svg>
<div class="box" style="left:14px;top:191px;width:30px;height:120px"></div>
<svg width="30" height="30" style="left:14px;top:191px"><g transform="translate(15 15) scale(1.28) translate(-15 -15)"><path d="M9 21.5l12-12" stroke="#333" stroke-width="1.2"/></g></svg>
<svg width="30" height="30" style="left:14px;top:221px"><g transform="translate(15 15) scale(1.28) translate(-15 -15)"><rect x="9.5" y="9.5" width="12" height="10" fill="none" stroke="#444" stroke-width="1.4"/></g></svg>
<svg width="30" height="30" style="left:14px;top:251px"><g transform="translate(15 15) scale(1.28) translate(-15 -15)"><rect x="9.5" y="9.5" width="12" height="10" rx="2.5" fill="none" stroke="#444" stroke-width="1.3"/></g></svg>
<svg width="30" height="30" style="left:14px;top:281px"><g transform="translate(15 15) scale(1.28) translate(-15 -15)"><ellipse cx="15.5" cy="15" rx="7" ry="5" fill="none" stroke="#444" stroke-width="1.3"/></g></svg>
<div class="box" style="left:14px;top:314px;width:30px;height:120px"></div>
<svg width="30" height="30" style="left:14px;top:314px"><g transform="translate(15 15) scale(1.28) translate(-15 -15)"><path d="M13.75 7.8L21.25 11.9L8.3 17.3L15.5 21.5Z" fill="none" stroke="#333" stroke-width="0.95" stroke-linejoin="round"/></g></svg>
<svg width="30" height="30" style="left:14px;top:344px"><g transform="translate(15 15) scale(1.28) translate(-15 -15)"><path d="M14.8 14.2C15.5 11 16.8 7.8 18.5 8C20.8 8.3 21 12.6 18 13.6C16.8 14 15.6 14 14.8 14.2C12 14.4 8.6 14.8 8.3 17.8C8.1 20.5 11.5 21.7 13.2 19.8C14.4 18.4 14.5 16 14.8 14.2Z" fill="none" stroke="#444" stroke-width="1"/></g></svg>
<svg width="30" height="30" style="left:14px;top:374px"><g transform="translate(15 15) scale(1.28) translate(-15 -15)"><path d="M9 15l4-7" stroke="#3bb2da" stroke-width="2.2"/><path d="M9 15l-0.5 2" stroke="#999" stroke-width="1"/><path d="M7 21l2-2 2 2 2-2 2 2 2-2 2 2 2-2" fill="none" stroke="#333" stroke-width="1"/></g></svg>
<svg width="30" height="30" style="left:14px;top:404px"><g transform="translate(15 15) scale(1.28) translate(-15 -15)"><path d="M10 15l4-7" stroke="#f0900a" stroke-width="2.2"/><path d="M10 15l-0.5 2" stroke="#999" stroke-width="1"/><path d="M8 20q1 3 4 2t5-3 4-1" fill="none" stroke="#333" stroke-width="1.1"/></g></svg>
<div class="box" style="left:14px;top:437px;width:30px;height:60px"></div>
<svg width="30" height="30" style="left:14px;top:437px"><g transform="translate(15 15) scale(1.28) translate(-15 -15)"><path d="M10 22l5-13q7 3 7 13z" fill="#fff" stroke="#e6e6e6" stroke-width="0.8"/><path d="M15 9q7 3 7 13" fill="none" stroke="#333" stroke-width="1.3"/></g></svg>
<svg width="30" height="30" style="left:14px;top:467px"><g transform="translate(15 15) scale(1.28) translate(-15 -15)"><polygon points="15.0,8.5 21.7,13.3 19.1,21.2 10.9,21.2 8.3,13.3" fill="none" stroke="#444" stroke-width="1.2"/></g></svg>
<div class="box" style="left:14px;top:500px;width:30px;height:30px"></div>
<svg width="30" height="30" style="left:14px;top:500px"><g transform="translate(15 15) scale(1.28) translate(-15 -15)"><text x="6" y="22" font-family="Liberation Serif" font-weight="bold" font-size="17" fill="#333">A</text><path d="M21 8v14M19.5 8h3M19.5 22h3" stroke="#3bb2da" stroke-width="1"/></g></svg>
<div class="box" style="left:14px;top:533px;width:30px;height:60px"></div>
<svg width="30" height="30" style="left:14px;top:533px"><g transform="translate(15 15) scale(1.28) translate(-15 -15)"><path d="M8 18l7-7 8-2-1 4-7 7-6 1z" fill="#fff" stroke="#444" stroke-width="1.1"/><path d="M15 11l3 3-7 7M18 14l4-1" fill="none" stroke="#444" stroke-width="1"/></g></svg>
<svg width="30" height="30" style="left:14px;top:563px"><g transform="translate(15 15) scale(1.28) translate(-15 -15)"><path d="M9 23l2-6 8-9q2-1 2 1l-8 10z" fill="#fff" stroke="#444" stroke-width="1.1"/><path d="M9 23l3-5" stroke="#444" stroke-width="1"/></g></svg>
<div class="box" style="left:14px;top:613px;width:30px;height:90px"></div>
<div class="a" style="left:15px;top:614px;width:28px;height:29px;background:#8fd8ee;border-bottom:1px solid #3bb2da"></div>
<svg width="30" height="30" style="left:14px;top:613px"><g transform="translate(15 15) scale(1.28) translate(-15 -15)"><rect x="8.5" y="9.5" width="14" height="11" fill="#8fd8ee" stroke="#3a8ea8" stroke-width="2"/></g></svg>
<svg width="30" height="30" style="left:14px;top:643px"><g transform="translate(15 15) scale(1.28) translate(-15 -15)"><path d="M15 10q-4-2-8-1v12q4-1 8 1q4-2 8-1v-12q-4-1-8 1zM15 10v12" fill="#fff" stroke="#555" stroke-width="1"/><path d="M9 12.5h4M9 15h4M9 17.5h4M17 12.5h4M17 15h4M17 17.5h4" stroke="#888" stroke-width="0.7"/></g></svg>
<svg width="30" height="30" style="left:14px;top:673px"><g transform="translate(15 15) scale(1.28) translate(-15 -15)"><circle cx="15" cy="15" r="8" fill="#3cacd6" stroke="#cde6ee" stroke-width="1"/><path d="M18.5 10q-3-2-5.5 0t1.5 4.5 1 4.5q-2 2-5 0" stroke="#fff" stroke-width="1.6" fill="none"/></g></svg>
<div class="box" style="left:14px;top:723px;width:30px;height:60px"></div>
<div class="a" style="left:15px;top:724px;width:28px;height:29px;background:#8fd8ee;border-bottom:1px solid #3bb2da"></div>
<svg width="30" height="30" style="left:14px;top:723px"><g transform="translate(15 15) scale(1.28) translate(-15 -15)"><rect x="8.5" y="9.5" width="14" height="11" fill="#8fd8ee" stroke="#4a9ab2" stroke-width="1.2"/><path d="M8.5 11.5h14" stroke="#4a9ab2" stroke-width="1.4"/></g></svg>
<svg width="30" height="30" style="left:14px;top:753px"><g transform="translate(15 15) scale(1.28) translate(-15 -15)"><rect x="8.5" y="9.5" width="14" height="11" fill="#fff" stroke="#555" stroke-width="1.1"/><path d="M8.5 11.5h14M15.5 11.5v9" stroke="#555" stroke-width="1.1"/></g></svg>
<div class="a" style="left:50px;top:128px;width:1470px;height:892px;border:1px solid #3bb2da;background:#c6c6c6"></div>
<div class="a" style="left:51px;top:129px;width:1449px;height:19px;background:#f2f2f2"></div>
<div class="a" style="left:468px;top:129px;width:634px;height:19px;background:#d2d2d2"></div>
<div class="a" style="left:51px;top:146px;width:1449px;height:2px;background:rgba(0,0,0,0.07)"></div>
<svg width="1449" height="19" style="left:51px;top:129px;overflow:hidden"><path d="M-5.5 11V19M0.5 15V19M6.5 15V19M12.5 15V19M18.5 15V19M25.5 12V19M31.5 15V19M37.5 15V19M43.5 15V19M49.5 15V19M55.5 11V19M61.5 15V19M67.5 15V19M73.5 15V19M79.5 15V19M85.5 12V19M91.5 15V19M97.5 15V19M103.5 15V19M109.5 15V19M115.5 11V19M121.5 15V19M127.5 15V19M133.5 15V19M139.5 15V19M145.5 12V19M151.5 15V19M157.5 15V19M163.5 15V19M169.5 15V19M175.5 11V19M182.5 15V19M188.5 15V19M194.5 15V19M200.5 15V19M206.5 12V19M212.5 15V19M218.5 15V19M224.5 15V19M230.5 15V19M236.5 11V19M242.5 15V19M248.5 15V19M254.5 15V19M260.5 15V19M266.5 12V19M272.5 15V19M278.5 15V19M284.5 15V19M290.5 15V19M296.5 11V19M302.5 15V19M308.5 15V19M314.5 15V19M320.5 15V19M326.5 12V19M332.5 15V19M339.5 15V19M345.5 15V19M351.5 15V19M357.5 11V19M363.5 15V19M369.5 15V19M375.5 15V19M381.5 15V19M387.5 12V19M393.5 15V19M399.5 15V19M405.5 15V19M411.5 15V19M417.5 11V19M423.5 15V19M429.5 15V19M435.5 15V19M441.5 15V19M447.5 12V19M453.5 15V19M459.5 15V19M465.5 15V19M471.5 15V19M477.5 11V19M483.5 15V19M489.5 15V19M495.5 15V19M502.5 15V19M508.5 12V19M514.5 15V19M520.5 15V19M526.5 15V19M532.5 15V19M538.5 11V19M544.5 15V19M550.5 15V19M556.5 15V19M562.5 15V19M568.5 12V19M574.5 15V19M580.5 15V19M586.5 15V19M592.5 15V19M598.5 11V19M604.5 15V19M610.5 15V19M616.5 15V19M622.5 15V19M628.5 12V19M634.5 15V19M640.5 15V19M646.5 15V19M652.5 15V19M659.5 11V19M665.5 15V19M671.5 15V19M677.5 15V19M683.5 15V19M689.5 12V19M695.5 15V19M701.5 15V19M707.5 15V19M713.5 15V19M719.5 11V19M725.5 15V19M731.5 15V19M737.5 15V19M743.5 15V19M749.5 12V19M755.5 15V19M761.5 15V19M767.5 15V19M773.5 15V19M779.5 11V19M785.5 15V19M791.5 15V19M797.5 15V19M803.5 15V19M809.5 12V19M816.5 15V19M822.5 15V19M828.5 15V19M834.5 15V19M840.5 11V19M846.5 15V19M852.5 15V19M858.5 15V19M864.5 15V19M870.5 12V19M876.5 15V19M882.5 15V19M888.5 15V19M894.5 15V19M900.5 11V19M906.5 15V19M912.5 15V19M918.5 15V19M924.5 15V19M930.5 12V19M936.5 15V19M942.5 15V19M948.5 15V19M954.5 15V19M960.5 11V19M966.5 15V19M973.5 15V19M979.5 15V19M985.5 15V19M991.5 12V19M997.5 15V19M1003.5 15V19M1009.5 15V19M1015.5 15V19M1021.5 11V19M1027.5 15V19M1033.5 15V19M1039.5 15V19M1045.5 15V19M1051.5 12V19M1057.5 15V19M1063.5 15V19M1069.5 15V19M1075.5 15V19M1081.5 11V19M1087.5 15V19M1093.5 15V19M1099.5 15V19M1105.5 15V19M1111.5 12V19M1117.5 15V19M1123.5 15V19M1129.5 15V19M1136.5 15V19M1142.5 11V19M1148.5 15V19M1154.5 15V19M1160.5 15V19M1166.5 15V19M1172.5 12V19M1178.5 15V19M1184.5 15V19M1190.5 15V19M1196.5 15V19M1202.5 11V19M1208.5 15V19M1214.5 15V19M1220.5 15V19M1226.5 15V19M1232.5 12V19M1238.5 15V19M1244.5 15V19M1250.5 15V19M1256.5 15V19M1262.5 11V19M1268.5 15V19M1274.5 15V19M1280.5 15V19M1286.5 15V19M1293.5 12V19M1299.5 15V19M1305.5 15V19M1311.5 15V19M1317.5 15V19M1323.5 11V19M1329.5 15V19M1335.5 15V19M1341.5 15V19M1347.5 15V19M1353.5 12V19M1359.5 15V19M1365.5 15V19M1371.5 15V19M1377.5 15V19M1383.5 11V19M1389.5 15V19M1395.5 15V19M1401.5 15V19M1407.5 15V19M1413.5 12V19M1419.5 15V19M1425.5 15V19M1431.5 15V19M1437.5 15V19M1443.5 11V19" stroke="#6e6e6e" stroke-width="1"/><text x="-5.7" y="10" text-anchor="middle" font-size="10" fill="#555" font-family="Liberation Sans">-140</text><text x="54.7" y="10" text-anchor="middle" font-size="10" fill="#555" font-family="Liberation Sans">-120</text><text x="115.1" y="10" text-anchor="middle" font-size="10" fill="#555" font-family="Liberation Sans">-100</text><text x="175.5" y="10" text-anchor="middle" font-size="10" fill="#555" font-family="Liberation Sans">-80</text><text x="235.9" y="10" text-anchor="middle" font-size="10" fill="#555" font-family="Liberation Sans">-60</text><text x="296.2" y="10" text-anchor="middle" font-size="10" fill="#555" font-family="Liberation Sans">-40</text><text x="356.6" y="10" text-anchor="middle" font-size="10" fill="#555" font-family="Liberation Sans">-20</text><text x="417.0" y="10" text-anchor="middle" font-size="10" fill="#555" font-family="Liberation Sans">0</text><text x="477.4" y="10" text-anchor="middle" font-size="10" fill="#555" font-family="Liberation Sans">20</text><text x="537.8" y="10" text-anchor="middle" font-size="10" fill="#555" font-family="Liberation Sans">40</text><text x="598.1" y="10" text-anchor="middle" font-size="10" fill="#555" font-family="Liberation Sans">60</text><text x="658.5" y="10" text-anchor="middle" font-size="10" fill="#555" font-family="Liberation Sans">80</text><text x="718.9" y="10" text-anchor="middle" font-size="10" fill="#555" font-family="Liberation Sans">100</text><text x="779.3" y="10" text-anchor="middle" font-size="10" fill="#555" font-family="Liberation Sans">120</text><text x="839.7" y="10" text-anchor="middle" font-size="10" fill="#555" font-family="Liberation Sans">140</text><text x="900.0" y="10" text-anchor="middle" font-size="10" fill="#555" font-family="Liberation Sans">160</text><text x="960.4" y="10" text-anchor="middle" font-size="10" fill="#555" font-family="Liberation Sans">180</text><text x="1020.8" y="10" text-anchor="middle" font-size="10" fill="#555" font-family="Liberation Sans">200</text><text x="1081.2" y="10" text-anchor="middle" font-size="10" fill="#555" font-family="Liberation Sans">220</text><text x="1141.6" y="10" text-anchor="middle" font-size="10" fill="#555" font-family="Liberation Sans">240</text><text x="1202.0" y="10" text-anchor="middle" font-size="10" fill="#555" font-family="Liberation Sans">260</text><text x="1262.3" y="10" text-anchor="middle" font-size="10" fill="#555" font-family="Liberation Sans">280</text><text x="1322.7" y="10" text-anchor="middle" font-size="10" fill="#555" font-family="Liberation Sans">300</text><text x="1383.1" y="10" text-anchor="middle" font-size="10" fill="#555" font-family="Liberation Sans">320</text><text x="1443.5" y="10" text-anchor="middle" font-size="10" fill="#555" font-family="Liberation Sans">340</text></svg>
<div class="a" style="left:59px;top:130px;width:69px;height:15px;background:#fff;border:1px solid #dedede;border-radius:3px;font-size:9.2px;color:#5a5a5a;padding:3px 0 0 3px;white-space:nowrap;letter-spacing:-0.15px">33,331 , 25,851</div>
<div class="a" style="left:60px;top:151px;width:80px;height:14px;background:#8fd6ec;border:1px solid #a9b9bf;border-radius:1px;font-size:9px;color:#3e6f80;padding:1px 0 0 3px;white-space:nowrap;letter-spacing:-0.2px">VISTA DE DISEÑO</div>
<div class="a" style="left:1500px;top:129px;width:19px;height:874px;background:#d2d2d2;border-left:1px solid #aaa"></div>
<div class="a" style="left:1500px;top:129px;width:19px;height:93px;background:#f2f2f2;border-left:1px solid #ccc"></div>
<svg width="19" height="874" style="left:1500px;top:129px"><path d="M1 2.5H9M1 8.5H6M1 15.5H6M1 21.5H6M1 27.5H6M1 33.5H11M1 39.5H6M1 45.5H6M1 51.5H6M1 57.5H6M1 63.5H9M1 69.5H6M1 75.5H6M1 81.5H6M1 87.5H6M1 93.5H11M1 99.5H6M1 105.5H6M1 111.5H6M1 117.5H6M1 123.5H9M1 129.5H6M1 135.5H6M1 141.5H6M1 147.5H6M1 153.5H11M1 159.5H6M1 165.5H6M1 171.5H6M1 178.5H6M1 184.5H9M1 190.5H6M1 196.5H6M1 202.5H6M1 208.5H6M1 214.5H11M1 220.5H6M1 226.5H6M1 232.5H6M1 238.5H6M1 244.5H9M1 250.5H6M1 256.5H6M1 262.5H6M1 268.5H6M1 274.5H11M1 280.5H6M1 286.5H6M1 292.5H6M1 298.5H6M1 304.5H9M1 310.5H6M1 316.5H6M1 322.5H6M1 328.5H6M1 335.5H11M1 341.5H6M1 347.5H6M1 353.5H6M1 359.5H6M1 365.5H9M1 371.5H6M1 377.5H6M1 383.5H6M1 389.5H6M1 395.5H11M1 401.5H6M1 407.5H6M1 413.5H6M1 419.5H6M1 425.5H9M1 431.5H6M1 437.5H6M1 443.5H6M1 449.5H6M1 455.5H11M1 461.5H6M1 467.5H6M1 473.5H6M1 479.5H6M1 485.5H9M1 492.5H6M1 498.5H6M1 504.5H6M1 510.5H6M1 516.5H11M1 522.5H6M1 528.5H6M1 534.5H6M1 540.5H6M1 546.5H9M1 552.5H6M1 558.5H6M1 564.5H6M1 570.5H6M1 576.5H11M1 582.5H6M1 588.5H6M1 594.5H6M1 600.5H6M1 606.5H9M1 612.5H6M1 618.5H6M1 624.5H6M1 630.5H6M1 636.5H11M1 642.5H6M1 649.5H6M1 655.5H6M1 661.5H6M1 667.5H9M1 673.5H6M1 679.5H6M1 685.5H6M1 691.5H6M1 697.5H11M1 703.5H6M1 709.5H6M1 715.5H6M1 721.5H6M1 727.5H9M1 733.5H6M1 739.5H6M1 745.5H6M1 751.5H6M1 757.5H11M1 763.5H6M1 769.5H6M1 775.5H6M1 781.5H6M1 787.5H9M1 793.5H6M1 799.5H6M1 805.5H6M1 812.5H6M1 818.5H11M1 824.5H6M1 830.5H6M1 836.5H6M1 842.5H6M1 848.5H9M1 854.5H6M1 860.5H6M1 866.5H6M1 872.5H6" stroke="#6e6e6e" stroke-width="1"/><text x="0" y="0" transform="translate(9.5 32.6) rotate(90)" text-anchor="middle" font-size="10" fill="#555" font-family="Liberation Sans">-20</text><text x="0" y="0" transform="translate(9.5 93.0) rotate(90)" text-anchor="middle" font-size="10" fill="#555" font-family="Liberation Sans">0</text><text x="0" y="0" transform="translate(9.5 153.4) rotate(90)" text-anchor="middle" font-size="10" fill="#555" font-family="Liberation Sans">20</text><text x="0" y="0" transform="translate(9.5 213.8) rotate(90)" text-anchor="middle" font-size="10" fill="#555" font-family="Liberation Sans">40</text><text x="0" y="0" transform="translate(9.5 274.1) rotate(90)" text-anchor="middle" font-size="10" fill="#555" font-family="Liberation Sans">60</text><text x="0" y="0" transform="translate(9.5 334.5) rotate(90)" text-anchor="middle" font-size="10" fill="#555" font-family="Liberation Sans">80</text><text x="0" y="0" transform="translate(9.5 394.9) rotate(90)" text-anchor="middle" font-size="10" fill="#555" font-family="Liberation Sans">100</text><text x="0" y="0" transform="translate(9.5 455.3) rotate(90)" text-anchor="middle" font-size="10" fill="#555" font-family="Liberation Sans">120</text><text x="0" y="0" transform="translate(9.5 515.7) rotate(90)" text-anchor="middle" font-size="10" fill="#555" font-family="Liberation Sans">140</text><text x="0" y="0" transform="translate(9.5 576.0) rotate(90)" text-anchor="middle" font-size="10" fill="#555" font-family="Liberation Sans">160</text><text x="0" y="0" transform="translate(9.5 636.4) rotate(90)" text-anchor="middle" font-size="10" fill="#555" font-family="Liberation Sans">180</text><text x="0" y="0" transform="translate(9.5 696.8) rotate(90)" text-anchor="middle" font-size="10" fill="#555" font-family="Liberation Sans">200</text><text x="0" y="0" transform="translate(9.5 757.2) rotate(90)" text-anchor="middle" font-size="10" fill="#555" font-family="Liberation Sans">220</text><text x="0" y="0" transform="translate(9.5 817.6) rotate(90)" text-anchor="middle" font-size="10" fill="#555" font-family="Liberation Sans">240</text></svg>
<div class="a" style="left:1519px;top:128px;width:17px;height:876px;border:1px solid #3bb2da;background:#eeeeee"></div>
<div class="a" style="left:1520px;top:143px;width:15px;height:5px;background:#fff"></div>
<div class="a" style="left:1519px;top:128px;width:17px;height:15px;background:#25b0d9"></div>
<svg width="17" height="15" style="left:1519px;top:128px"><path d="M4 4l3.5 3.5L4 11M9 4l3.5 3.5L9 11" fill="none" stroke="#fff" stroke-width="1.8"/></svg>
<div class="a" style="left:1519px;top:148px;width:17px;height:16px;background:#25b0d9"></div>
<svg width="17" height="16" style="left:1519px;top:148px"><path d="M8.5 3.5l5.5 8.5h-11z" fill="#fff"/></svg>
<div class="a" style="left:1519px;top:988px;width:17px;height:16px;background:#25b0d9"></div>
<svg width="17" height="16" style="left:1519px;top:988px"><path d="M8.5 12.5l5.5-8.5h-11z" fill="#fff"/></svg>
<div class="a" style="left:1519px;top:501px;width:17px;height:103px;background:#25b0d9"></div>
<div class="a" style="left:50px;top:1003px;width:1470px;height:17px;border:1px solid #3bb2da;background:#eeeeee"></div>
<div class="a" style="left:50px;top:1003px;width:16px;height:17px;background:#25b0d9"></div>
<svg width="16" height="17" style="left:50px;top:1003px"><path d="M3.5 8.5l8.5-5.5v11z" fill="#fff"/></svg>
<div class="a" style="left:1504px;top:1003px;width:16px;height:17px;background:#25b0d9"></div>
<svg width="16" height="17" style="left:1504px;top:1003px"><path d="M12.5 8.5l-8.5-5.5v11z" fill="#fff"/></svg>
<div class="a" style="left:641px;top:1003px;width:286px;height:17px;background:#25b0d9"></div>
<svg width="1449" height="855" style="left:51px;top:148px"><defs><clipPath id="cv"><rect x="51" y="148" width="1449" height="855"/></clipPath></defs><g clip-path="url(#cv)" transform="translate(-51 -148)"><path d="M438.5 1100V176.5Q438.5 162.5 452.5 162.5H1404.5Q1418.5 162.5 1418.5 176.5V1100Z" fill="#a3a3a3" stroke="#666" stroke-width="1.2"/><path d="M440 172Q440 162.5 452.5 162.5H1404.5Q1417 162.5 1417 172" fill="none" stroke="#000" stroke-width="1.4"/><path d="M928 172L951.5 195.5H940V207.5H916V195.5H904.5Z" fill="#000"/><path d="M1158.5 222V1010M1235.5 222V1010M1312.5 222V1010M1388.5 222V1010M1102 222.5H1388M1102 299.5H1388M1102 375.5H1388M1102 452.5H1388M1102 529.5H1388M1102 605.5H1388M1102 682.5H1388M1102 759.5H1388M1102 835.5H1388M1102 912.5H1388M1102 989.5H1388M1102 1066.5H1388" stroke="#636363" stroke-width="1"/><path d="M1377 241.5H1388M1371 260.5H1388M1377 280.5H1388M1377 318.5H1388M1371 337.5H1388M1377 356.5H1388M1377 395.5H1388M1371 414.5H1388M1377 433.5H1388M1377 471.5H1388M1371 490.5H1388M1377 510.5H1388M1377 548.5H1388M1371 567.5H1388M1377 586.5H1388M1377 625.5H1388M1371 644.5H1388M1377 663.5H1388M1377 701.5H1388M1371 720.5H1388M1377 740.5H1388M1377 778.5H1388M1371 797.5H1388M1377 816.5H1388M1377 855.5H1388M1371 874.5H1388M1377 893.5H1388M1377 931.5H1388M1371 950.5H1388M1377 970.5H1388M1377 1008.5H1388M1371 1027.5H1388M1377 1046.5H1388M1377 1085.5H1388M1371 1104.5H1388M1377 1123.5H1388" stroke="#606060" stroke-width="1"/><text x="1154.2" y="235" text-anchor="end" font-size="10" fill="#555" font-family="Liberation Sans">9</text><text x="1230.8" y="235" text-anchor="end" font-size="10" fill="#555" font-family="Liberation Sans">10</text><text x="1307.5" y="235" text-anchor="end" font-size="10" fill="#555" font-family="Liberation Sans">11</text><text x="1384.2" y="235" text-anchor="end" font-size="10" fill="#555" font-family="Liberation Sans">12</text><rect x="1102" y="222" width="5" height="800" fill="url(#shd)"/><defs><linearGradient id="shd"><stop offset="0" stop-color="#555"/><stop offset="1" stop-color="#a3a3a3" stop-opacity="0"/></linearGradient></defs><rect x="466.5" y="222" width="1.5" height="800" fill="#6a6a6a"/><rect x="468" y="222" width="634" height="800" fill="#fff"/><path d="M468 222.5H1102" stroke="#777" stroke-width="1"/><clipPath id="hc"><path d="M468 222H1102V305H1018V285H551V305H468Z"/></clipPath><g clip-path="url(#hc)"><path d="M59 200L189 330M74 200L204 330M89 200L219 330M104 200L234 330M119 200L249 330M134 200L264 330M149 200L279 330M164 200L294 330M179 200L309 330M194 200L324 330M209 200L339 330M224 200L354 330M239 200L369 330M254 200L384 330M269 200L399 330M284 200L414 330M299 200L429 330M314 200L444 330M329 200L459 330M344 200L474 330M359 200L489 330M374 200L504 330M389 200L519 330M404 200L534 330M419 200L549 330M434 200L564 330M449 200L579 330M464 200L594 330M479 200L609 330M494 200L624 330M509 200L639 330M524 200L654 330M539 200L669 330M554 200L684 330M569 200L699 330M584 200L714 330M599 200L729 330M614 200L744 330M629 200L759 330M644 200L774 330M659 200L789 330M674 200L804 330M689 200L819 330M704 200L834 330M719 200L849 330M734 200L864 330M749 200L879 330M764 200L894 330M779 200L909 330M794 200L924 330M809 200L939 330M824 200L954 330M839 200L969 330M854 200L984 330M869 200L999 330M884 200L1014 330M899 200L1029 330M914 200L1044 330M929 200L1059 330M944 200L1074 330M959 200L1089 330M974 200L1104 330M989 200L1119 330M1004 200L1134 330M1019 200L1149 330M1034 200L1164 330M1049 200L1179 330M1064 200L1194 330M1079 200L1209 330M1094 200L1224 330M250 200L120 330M265 200L135 330M280 200L150 330M295 200L165 330M310 200L180 330M325 200L195 330M340 200L210 330M355 200L225 330M370 200L240 330M385 200L255 330M400 200L270 330M415 200L285 330M430 200L300 330M445 200L315 330M460 200L330 330M475 200L345 330M490 200L360 330M505 200L375 330M520 200L390 330M535 200L405 330M550 200L420 330M565 200L435 330M580 200L450 330M595 200L465 330M610 200L480 330M625 200L495 330M640 200L510 330M655 200L525 330M670 200L540 330M685 200L555 330M700 200L570 330M715 200L585 330M730 200L600 330M745 200L615 330M760 200L630 330M775 200L645 330M790 200L660 330M805 200L675 330M820 200L690 330M835 200L705 330M850 200L720 330M865 200L735 330M880 200L750 330M895 200L765 330M910 200L780 330M925 200L795 330M940 200L810 330M955 200L825 330M970 200L840 330M985 200L855 330M1000 200L870 330M1015 200L885 330M1030 200L900 330M1045 200L915 330M1060 200L930 330M1075 200L945 330M1090 200L960 330M1105 200L975 330M1120 200L990 330M1135 200L1005 330M1150 200L1020 330M1165 200L1035 330M1180 200L1050 330M1195 200L1065 330M1210 200L1080 330M1225 200L1095 330M1240 200L1110 330M1255 200L1125 330M1270 200L1140 330M1285 200L1155 330M1300 200L1170 330M1315 200L1185 330M1330 200L1200 330M1345 200L1215 330M1360 200L1230 330M1375 200L1245 330M1390 200L1260 330M1405 200L1275 330M1420 200L1290 330M1435 200L1305 330" stroke="#707070" stroke-width="0.85" fill="none"/></g><path d="M516.5 1010V270.5H1053.5V1010" fill="none" stroke="#ff6060" stroke-width="1"/><rect x="516" y="270" width="16" height="17" fill="#000"/><path d="M1018 271H1053V306" fill="none" stroke="#000" stroke-width="2.2"/><circle cx="760" cy="537" r="182.6" fill="none" stroke="#ff7070" stroke-width="1"/><circle cx="759.4" cy="384.8" r="11.6" fill="none" stroke="#ff7070" stroke-width="1"/><defs>
<linearGradient id="boxg" x1="0" y1="0" x2="1" y2="0.3"><stop offset="0" stop-color="#cfae6c"/><stop offset="0.5" stop-color="#c3a062"/><stop offset="1" stop-color="#a8894e"/></linearGradient>
<linearGradient id="lidg" x1="0" y1="0" x2="0" y2="1"><stop offset="0" stop-color="#e3c98e"/><stop offset="1" stop-color="#c9a866"/></linearGradient>
<linearGradient id="ribg" x1="0" y1="0" x2="1" y2="0"><stop offset="0" stop-color="#1b9cc2"/><stop offset="0.5" stop-color="#27b4db"/><stop offset="1" stop-color="#1690b5"/></linearGradient>
<linearGradient id="bowg" x1="0" y1="0" x2="0" y2="1"><stop offset="0" stop-color="#3cc0e2"/><stop offset="0.5" stop-color="#1a9fc6"/><stop offset="1" stop-color="#0f6f8c"/></linearGradient>
</defs>
<!-- gift -->
<path d="M706.6 434H812.4L825 464H695Z" fill="url(#lidg)"/>
<rect x="695" y="464" width="130" height="21" fill="#c8a564"/>
<rect x="695" y="484" width="129" height="69.5" fill="url(#boxg)"/>
<path d="M695 484H824" stroke="#9c7f45" stroke-width="1.5" opacity="0.6"/>
<rect x="748.5" y="433" width="22" height="120.5" fill="url(#ribg)"/>
<!-- tails -->
<defs>
<linearGradient id="tl" x1="0" y1="0" x2="0" y2="1"><stop offset="0" stop-color="#1596be"/><stop offset="1" stop-color="#137fa3"/></linearGradient>
<linearGradient id="lo" x1="0" y1="0" x2="0" y2="1"><stop offset="0" stop-color="#0a2f3d"/><stop offset="0.3" stop-color="#0d4a60"/><stop offset="0.7" stop-color="#1787ad"/><stop offset="1" stop-color="#1ba3cb"/></linearGradient>
<linearGradient id="up" x1="0" y1="0" x2="0" y2="1"><stop offset="0" stop-color="#38bde2"/><stop offset="0.6" stop-color="#1ea6cf"/><stop offset="1" stop-color="#1487ad"/></linearGradient>
</defs>
<path d="M742 460L704.3 500.3L713.6 494.5L727.6 502.7L746 465Z" fill="url(#tl)"/>
<path d="M779 462C785 480 789 500 791.5 519L802 507L817 508.5C812 492 807 478 802 464Z" fill="#17a2cc"/>
<path d="M787 468C792 485 795 500 796 512" stroke="#0f6f8e" stroke-width="3" fill="none" opacity="0.5"/>
<!-- lower loops -->
<path d="M757 444C745 440 722 442 713 452C709 462 716 471 727 471C740 471 751 464 758 458Z" fill="url(#lo)"/>
<path d="M763 444C775 440 797 442 806 452C810 462 803 471 792 471C780 471 770 464 762 458Z" fill="url(#lo)"/>
<!-- upper loops -->
<path d="M757 447C753 428 747 412 737 410C722 409 707 424 707.5 437C709 448 718 452 730 450C742 449 750 450 757 452Z" fill="url(#up)"/>
<path d="M716 437C724 428 740 430 752 446C740 441 728 440 716 437Z" fill="#0e5a74" opacity="0.6"/>
<path d="M763 447C768 428 776 416 786 416C800 418 812 430 811 442C810 450 802 452 790 450C778 449 770 450 763 452Z" fill="url(#up)"/>
<path d="M804 440C795 430 780 432 768 446C780 441 792 440 804 440Z" fill="#0e5a74" opacity="0.6"/>
<path d="M725 414C735 410 745 416 750 430" stroke="#6ad6f2" stroke-width="2" fill="none" opacity="0.6"/>
<path d="M776 422C786 416 798 418 806 428" stroke="#6ad6f2" stroke-width="2" fill="none" opacity="0.6"/>
<ellipse cx="759.5" cy="448" rx="9.3" ry="7" fill="#1cabd3"/>
<ellipse cx="759" cy="446" rx="5" ry="3.5" fill="#40c2e6" opacity="0.7"/>
<g transform="translate(605 565) scale(0.0969)" fill="none" stroke="#1893ac" stroke-width="40" stroke-linecap="round" stroke-linejoin="round">
<path d="M205 259C190 292 140 287 128 254C118 200 200 130 320 115C400 108 442 160 434 209C428 290 340 332 263 317"/>
<path d="M272 182C262 280 250 400 222 433C200 458 150 462 135 412"/>
<path d="M623 286C600 225 520 220 490 290C465 350 470 440 524 447C560 450 592 400 627 277C612 350 600 420 615 445C632 468 668 440 679 382C688 320 675 260 680 215C685 170 710 150 730 155C755 165 755 215 740 250C732 268 718 275 712 268C745 262 790 228 828 235C805 300 785 400 793 445C805 470 860 455 892 363"/>
<path d="M1020 263C1005 225 950 225 920 270C895 320 890 420 919 443C950 460 985 430 1000 404C1020 370 1040 320 1052 283C1040 340 1025 410 1031 430C1040 470 1080 470 1100 440C1115 420 1130 385 1139 355"/>
<path d="M422 713C400 745 345 740 338 704C335 650 420 580 526 577C620 578 665 660 657 727C650 800 600 900 516 920C480 925 462 912 456 900"/>
<path d="M484 643C475 740 470 840 455 895C440 925 370 935 347 864"/>
<path d="M705 836C760 820 830 770 836 715C840 680 790 675 760 700C720 735 700 800 710 860C720 910 780 930 830 905C870 885 900 850 916 812"/>
</g>
<g fill="#1893ac"><circle cx="725.6" cy="593" r="2.9"/><circle cx="704" cy="637.8" r="2.9"/><circle cx="703.1" cy="649" r="2.9"/></g>
<!-- selection group 1 -->
<path d="M806.5 585V598" stroke="#555" stroke-width="1"/>
<circle cx="806.5" cy="572" r="4" fill="#00e000" stroke="#2a4a2a" stroke-width="0.8"/>
<path d="M738.5 604.5H874.5M738.5 618.5H874.5" stroke="#555" stroke-width="1"/>
<path d="M732.5 611.5H880.5" stroke="#ff7070" stroke-width="1"/>
<g fill="#fff" stroke="#555" stroke-width="1"><rect x="722.5" y="601.5" width="6" height="6"/><rect x="722.5" y="615.5" width="6" height="6"/><rect x="884.5" y="601.5" width="6" height="6"/><rect x="884.5" y="615.5" width="6" height="6"/>
<rect x="712.5" y="643.5" width="6" height="6"/><rect x="712.5" y="657.5" width="6" height="6"/><rect x="869.5" y="643.5" width="6" height="6"/><rect x="869.5" y="657.5" width="6" height="6"/></g>
<circle cx="794" cy="614" r="3.8" fill="#00e000" stroke="#2a4a2a" stroke-width="0.8"/>
<g stroke="#555" stroke-width="1" fill="none">
<path d="M732.5 623V636M880.5 623V636M741 629.5H775M838 629.5H872M741 625.5L733 629.5L741 633.5ZM872 625.5L880 629.5L872 633.5ZM794.5 628V640"/>
<path d="M728.5 646.5H859.5M728.5 660.5H859.5"/>
<path d="M722.5 665V678M866.5 665V678M731 671.5H763.5M826 671.5H858M731 667.5L723 671.5L731 675.5ZM858 667.5L866 671.5L858 675.5Z"/>
</g>
<path d="M722 653.5H866" stroke="#ff1010" stroke-width="1.4"/>
<text x="806.5" y="635" text-anchor="middle" font-size="12.5" fill="#a8a8a8" font-family="Liberation Sans">4,882 cm</text>
<text x="794.2" y="677" text-anchor="middle" font-size="12.5" fill="#a8a8a8" font-family="Liberation Sans">4,756 cm</text>
</g></svg>
<svg width="160" height="26" style="left:50px;top:978px"><path d="M0.5 25L11.5 3Q12.5 1.5 14 1.5H134Q135.5 1.5 136.5 3L147.5 25Z" fill="#fff" stroke="#3bb2da" stroke-width="1"/><circle cx="178" cy="0" r="0"/></svg>
<svg width="20" height="20" style="left:168.5px;top:981px"><circle cx="9.5" cy="9.5" r="6.5" fill="#fff" stroke="#e8e8e8" stroke-width="1"/></svg>
<div class="a" style="left:66px;top:986px;font-size:12px;color:#3c3c3c;white-space:nowrap">Sin título-1.studio3</div>
<div class="a" style="left:174px;top:982px;font-size:11.5px;font-weight:bold;color:#2aa0d8">x</div>
<div class="a" style="left:1542px;top:128px;width:364px;height:892px;border:1px solid #3bb2da;background:#fff"></div>
<div class="a" style="left:1553px;top:138px;font-size:15px;color:#111;white-space:nowrap;letter-spacing:0">ESTILO DE TRAZO</div>
<div class="a" style="left:1552px;top:157px;width:344px;height:1px;background:#777"></div>
<div class="a" style="left:1552px;top:161px;width:344px;height:1px;background:#3bb2da"></div>
<div class="a" style="left:1560px;top:180px;width:312px;height:822px;border:1px solid #3bb2da;background:#fff"></div>
<!-- headers -->
<div class="a hd" style="top:181px">Estilo de trazo</div>
<div class="a hd" style="top:358px">Grosor de trazo</div>
<div class="a hd" style="top:413px">Estilo de vértice</div>
<div class="a hd" style="top:549px">Estilo de remate</div>
<div class="a hd" style="top:685px">Posición</div>
<!-- stroke list -->
<div class="a" style="left:1566px;top:202px;width:301px;height:150px;border:1px solid #3bb2da;background:#fff"></div>
<svg width="300" height="150" style="left:1566px;top:202px">
<path d="M6 16H280" stroke="#333" stroke-width="2"/>
<path d="M6 46H280" stroke="#333" stroke-width="2" stroke-dasharray="5.7 2.35"/>
<path d="M6 76H280" stroke="#333" stroke-width="2" stroke-dasharray="12 8"/>
<path d="M6 106H270" stroke="#333" stroke-width="2" stroke-dasharray="22 17.8"/>
<path d="M6 136H280" stroke="#333" stroke-width="2" stroke-dasharray="13.8 2"/>
</svg>
<div class="a" style="left:1850px;top:202px;width:17px;height:150px;background:#eeeeee;border-right:1px solid #3bb2da"></div>
<div class="a" style="left:1850px;top:202px;width:17px;height:101px;background:#25b0d9"></div>
<div class="a" style="left:1850px;top:336px;width:17px;height:16px;background:#25b0d9"></div>
<svg width="17" height="16" style="left:1850px;top:202px"><path d="M8.5 2.5l6 8.5h-12z" fill="#fff"/></svg>
<svg width="17" height="16" style="left:1850px;top:336px"><path d="M8.5 13.5l6-8.5h-12z" fill="#fff"/></svg>
<!-- thickness row -->
<div class="a" style="left:1566px;top:385.8px;font-size:11.6px;color:#000;white-space:nowrap">Grosor de trazo</div>
<div class="a" style="left:1657px;top:382px;width:64px;height:23px;border:1px solid #3bb2da;background:#fff"></div>
<div class="a" style="left:1661px;top:383px;width:1px;height:12px;background:#e02020"></div>
<svg width="14" height="10" style="left:1657px;top:395px"><path d="M0 10L5.5 0 11 10z" fill="#2aaedb"/></svg>
<div class="a" style="left:1727px;top:382px;width:58px;height:23px;border:1px solid #3bb2da;background:#fff"></div>
<div class="a" style="left:1730px;top:387px;font-size:12px;color:#000">1,0</div>
<div class="a" style="left:1786px;top:382px;width:10px;height:23px;background:#25b0d9"></div>
<svg width="10" height="23" style="left:1786px;top:382px"><path d="M5 2.5l3.5 5h-7zM5 20.5l3.5-5h-7z" fill="#fff"/></svg>
<div class="a" style="left:1800px;top:386px;font-size:12px;color:#000">pt</div>
<div class="a" style="left:1830px;top:382px;width:36px;height:23px;border:1px solid #3bb2da;background:#fff;font-size:12px;color:#6a8090;text-align:center;padding-top:3px">pt</div>
<!-- options -->
<div class="a" style="left:1566px;top:435px;width:301px;height:109px;border:1px solid #3bb2da;background:#fff"></div>
<div class="a" style="left:1567px;top:507px;width:299px;height:36px;background:#92d9ed;border-top:1px solid #3bb2da"></div>
<div class="a" style="left:1566px;top:571px;width:301px;height:109px;border:1px solid #3bb2da;background:#fff"></div>
<div class="a" style="left:1567px;top:643px;width:299px;height:36px;background:#92d9ed;border-top:1px solid #3bb2da"></div>
<div class="a" style="left:1566px;top:707px;width:301px;height:73px;border:1px solid #3bb2da;background:#fff"></div>
<div class="a" style="left:1567px;top:708px;width:299px;height:35px;background:#92d9ed;border-bottom:1px solid #3bb2da"></div>
<div class="a opt" style="top:446px">Vértice</div>
<div class="a opt" style="top:482px">Biselado</div>
<div class="a opt sl" style="top:518px">Redondeado</div>
<div class="a opt" style="top:582px">Recto</div>
<div class="a opt" style="top:618px">Cuadrado</div>
<div class="a opt sl" style="top:654px">Redondeado</div>
<div class="a opt sl" style="top:718px">Delante</div>
<div class="a opt" style="top:754px">Detrás</div>
<svg width="24" height="350" style="left:1572px;top:440px">
<path d="M2 3h20v20h-20z" fill="#777"/><path d="M9 3h13v13h-13z" fill="#4ab4dc"/>
<path d="M2 39h20v20h-15l-5-5z" fill="#777"/><path d="M9 39h13v13h-13z" fill="#4ab4dc"/>
<path d="M2 75h20v20h-13a7 7 0 0 1-7-7z" fill="#4f90a6"/><path d="M9 75h13v13h-13z" fill="#3aacd6"/>
<path d="M6 143h18v12h-18z" fill="#444"/>
<path d="M0.5 179.5h5.5v11h-5.5z" fill="#fff" stroke="#444" stroke-width="1"/><path d="M6 179h18v12h-18z" fill="#444"/>
<path d="M6 215a6 6 0 0 0 0 12" fill="none" stroke="#3a7a90" stroke-width="1"/><path d="M6 215h18v12h-18z" fill="#3a7a90"/>
<rect x="2" y="273" width="21" height="22" rx="3" fill="#3a7f96"/><rect x="6.5" y="277.5" width="12" height="13" fill="#4ab4dc"/>
<rect x="3.5" y="310.5" width="18" height="19" rx="2" fill="#5ab8d8" stroke="#333" stroke-width="3"/>
</svg>
<div class="a" style="left:1566px;top:788px;width:20px;height:20px;border:1px solid #3bb2da;background:#fff"></div>
<div class="a" style="left:1589px;top:791px;font-size:12px;color:#000;white-space:nowrap">Imprimir líneas formas selec.</div>

<svg width="1920" height="1032" style="left:0;top:0;pointer-events:none">
<circle cx="1363" cy="70" r="15" fill="none" stroke="#ff0000" stroke-width="4"/>
<path d="M1363.2 92.1L1385.6 108.8H1379.3V125H1348.7V108.8H1342.3Z" fill="#ff0000"/>
<path d="M1549.9 395.3L1533.2 374.2V380.7H1517V411.2H1533.2V417.7Z" fill="#ff0000"/>
<rect x="1564.5" y="376" width="304.3" height="36" rx="18" fill="none" stroke="#ff0000" stroke-width="4"/>
<circle cx="1737" cy="393.7" r="17" fill="none" stroke="#ff0000" stroke-width="4"/>
</svg>

</body></html>
